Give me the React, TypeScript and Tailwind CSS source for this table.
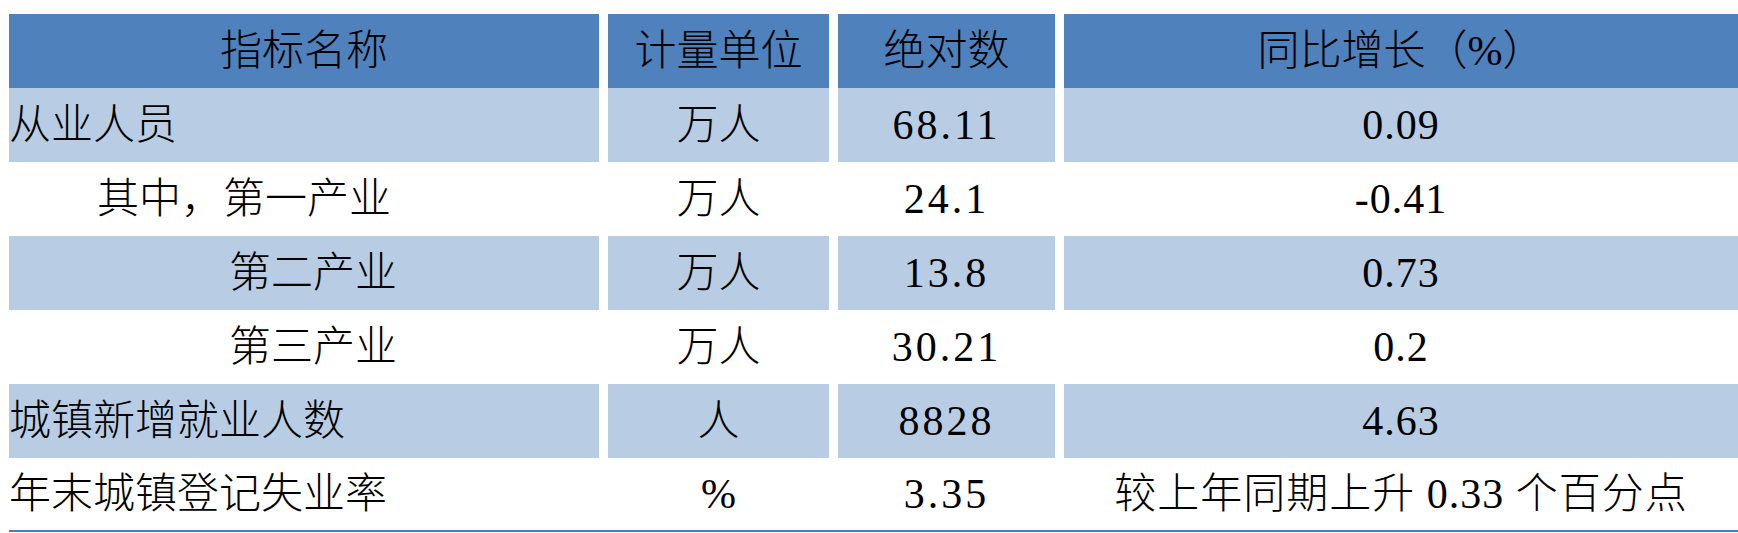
const HEAD = "bg-[#4f81bd]";
const BAND = "bg-[#b8cce4]";

interface Row {
  name: string;
  indent: string;
  unit: string;
  value: string;
  growth: string;
  banded: boolean;
}

const ROWS: Row[] = [
  { name: "从业人员", indent: "pl-0", unit: "万人", value: "68.11", growth: "0.09", banded: true },
  { name: "其中，第一产业", indent: "pl-[88px]", unit: "万人", value: "24.1", growth: "-0.41", banded: false },
  { name: "第二产业", indent: "pl-[220px]", unit: "万人", value: "13.8", growth: "0.73", banded: true },
  { name: "第三产业", indent: "pl-[220px]", unit: "万人", value: "30.21", growth: "0.2", banded: false },
  { name: "城镇新增就业人数", indent: "pl-0", unit: "人", value: "8828", growth: "4.63", banded: true },
  { name: "年末城镇登记失业率", indent: "pl-0", unit: "%", value: "3.35", growth: "较上年同期上升 0.33 个百分点", banded: false },
];

export default function App() {
  return (
    <div className="w-[1738px] h-[533px] bg-white pt-[14px] font-[Liberation_Serif,Noto_Sans_CJK_SC,serif] font-light text-[42px] text-black leading-none">
      <div className="ml-[9px] grid grid-cols-[590px_221px_217px_674px] gap-x-[9px] border-b-2 border-[#4a7ebb]">
        <div className={`${HEAD} h-[74px] flex items-center justify-center`}>指标名称</div>
        <div className={`${HEAD} h-[74px] flex items-center justify-center`}>计量单位</div>
        <div className={`${HEAD} h-[74px] flex items-center justify-center`}>绝对数</div>
        <div className={`${HEAD} h-[74px] flex items-center justify-center`}>同比增长（%）</div>
        {ROWS.map((r, i) => {
          const bg = r.banded ? BAND : "bg-white";
          const h = i === ROWS.length - 1 ? "h-[72px]" : "h-[74px]";
          return [
            <div key={`${i}a`} className={`${bg} ${h} ${r.indent} flex items-center whitespace-nowrap`}>{r.name}</div>,
            <div key={`${i}b`} className={`${bg} ${h} flex items-center justify-center`}>{r.unit}</div>,
            <div key={`${i}c`} className={`${bg} ${h} flex items-center justify-center tracking-[3px]`}>{r.value}</div>,
            <div key={`${i}d`} className={`${bg} ${h} flex items-center justify-center whitespace-nowrap tracking-[1px]`}>{r.growth}</div>,
          ];
        })}
      </div>
    </div>
  );
}
